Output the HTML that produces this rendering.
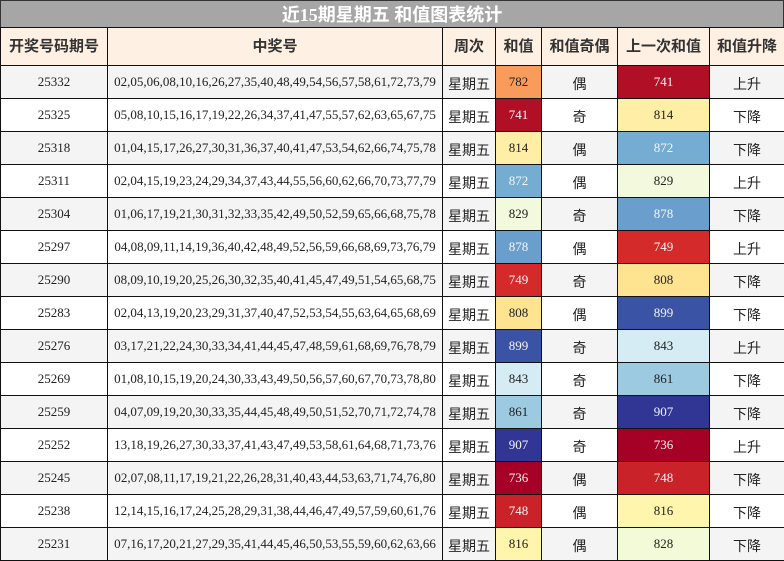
<!DOCTYPE html><html><head><meta charset="utf-8"><style>
body{margin:0;width:784px;height:561px;overflow:hidden;background:#fff;font-family:"Liberation Serif","Noto Sans CJK SC",serif}
.t{position:absolute;left:0;top:0;width:784px;height:28px;background:#a6a6a6;color:#fff;font:bold 18px/28px "Liberation Serif","Noto Sans CJK SC",sans-serif;text-align:center;box-sizing:border-box;border:1px solid #333;border-bottom:none}
table{position:absolute;left:0;top:27px;border-collapse:collapse;table-layout:fixed;width:784px}
tr{height:33px}
tr:first-child{height:38px}
td,th{border:1px solid #111;text-align:center;padding:0;overflow:hidden;white-space:nowrap;line-height:16px}
th{background:#fef0e2;color:#333;font:bold 15px/16px "Liberation Sans","Noto Sans CJK SC",sans-serif}
td{font-size:13px;color:#222}
tr:nth-child(even) td{background:#f4f4f4}
.c{font-family:"Liberation Sans","Noto Sans CJK SC",sans-serif;font-size:14px;line-height:16px;vertical-align:bottom;padding-bottom:6px}
.w{color:#f4f4f4}
</style></head><body>
<div class="t">近15期星期五 和值图表统计</div>
<table>
<colgroup><col style="width:107px"><col style="width:335px"><col style="width:53px"><col style="width:46px"><col style="width:76px"><col style="width:92px"><col style="width:75px"></colgroup>
<tr><th>开奖号码期号</th><th>中奖号</th><th>周次</th><th>和值</th><th>和值奇偶</th><th>上一次和值</th><th>和值升降</th></tr>
<tr><td>25332</td><td>02,05,06,08,10,16,26,27,35,40,48,49,54,56,57,58,61,72,73,79</td><td class="c">星期五</td><td style="background:#f99b5a!important">782</td><td class="c">偶</td><td class="w" style="background:#b10f26!important">741</td><td class="c">上升</td></tr>
<tr><td>25325</td><td>05,08,10,15,16,17,19,22,26,34,37,41,47,55,57,62,63,65,67,75</td><td class="c">星期五</td><td class="w" style="background:#b10f26!important">741</td><td class="c">奇</td><td style="background:#feeea6!important">814</td><td class="c">下降</td></tr>
<tr><td>25318</td><td>01,04,15,17,26,27,30,31,36,37,40,41,47,53,54,62,66,74,75,78</td><td class="c">星期五</td><td style="background:#feeea6!important">814</td><td class="c">偶</td><td class="w" style="background:#74add1!important">872</td><td class="c">下降</td></tr>
<tr><td>25311</td><td>02,04,15,19,23,24,29,34,37,43,44,55,56,60,62,66,70,73,77,79</td><td class="c">星期五</td><td class="w" style="background:#74add1!important">872</td><td class="c">偶</td><td style="background:#f2f9dc!important">829</td><td class="c">上升</td></tr>
<tr><td>25304</td><td>01,06,17,19,21,30,31,32,33,35,42,49,50,52,59,65,66,68,75,78</td><td class="c">星期五</td><td style="background:#f2f9dc!important">829</td><td class="c">奇</td><td class="w" style="background:#6a9fcd!important">878</td><td class="c">下降</td></tr>
<tr><td>25297</td><td>04,08,09,11,14,19,36,40,42,48,49,52,56,59,66,68,69,73,76,79</td><td class="c">星期五</td><td class="w" style="background:#6a9fcd!important">878</td><td class="c">偶</td><td class="w" style="background:#d42a2a!important">749</td><td class="c">上升</td></tr>
<tr><td>25290</td><td>08,09,10,19,20,25,26,30,32,35,40,41,45,47,49,51,54,65,68,75</td><td class="c">星期五</td><td class="w" style="background:#d42a2a!important">749</td><td class="c">奇</td><td style="background:#fee391!important">808</td><td class="c">下降</td></tr>
<tr><td>25283</td><td>02,04,13,19,20,23,29,31,37,40,47,52,53,54,55,63,64,65,68,69</td><td class="c">星期五</td><td style="background:#fee391!important">808</td><td class="c">偶</td><td class="w" style="background:#3a53a4!important">899</td><td class="c">下降</td></tr>
<tr><td>25276</td><td>03,17,21,22,24,30,33,34,41,44,45,47,48,59,61,68,69,76,78,79</td><td class="c">星期五</td><td class="w" style="background:#3a53a4!important">899</td><td class="c">奇</td><td style="background:#d6ecf4!important">843</td><td class="c">上升</td></tr>
<tr><td>25269</td><td>01,08,10,15,19,20,24,30,33,43,49,50,56,57,60,67,70,73,78,80</td><td class="c">星期五</td><td style="background:#d6ecf4!important">843</td><td class="c">奇</td><td style="background:#9ccae1!important">861</td><td class="c">下降</td></tr>
<tr><td>25259</td><td>04,07,09,19,20,30,33,35,44,45,48,49,50,51,52,70,71,72,74,78</td><td class="c">星期五</td><td style="background:#9ccae1!important">861</td><td class="c">奇</td><td class="w" style="background:#313695!important">907</td><td class="c">下降</td></tr>
<tr><td>25252</td><td>13,18,19,26,27,30,33,37,41,43,47,49,53,58,61,64,68,71,73,76</td><td class="c">星期五</td><td class="w" style="background:#313695!important">907</td><td class="c">奇</td><td class="w" style="background:#a50026!important">736</td><td class="c">上升</td></tr>
<tr><td>25245</td><td>02,07,08,11,17,19,21,22,26,28,31,40,43,44,53,63,71,74,76,80</td><td class="c">星期五</td><td class="w" style="background:#a50026!important">736</td><td class="c">偶</td><td class="w" style="background:#c92228!important">748</td><td class="c">下降</td></tr>
<tr><td>25238</td><td>12,14,15,16,17,24,25,28,29,31,38,44,46,47,49,57,59,60,61,76</td><td class="c">星期五</td><td class="w" style="background:#c92228!important">748</td><td class="c">偶</td><td style="background:#fff5ac!important">816</td><td class="c">下降</td></tr>
<tr><td>25231</td><td>07,16,17,20,21,27,29,35,41,44,45,46,50,53,55,59,60,62,63,66</td><td class="c">星期五</td><td style="background:#fff5ac!important">816</td><td class="c">偶</td><td style="background:#f3fad8!important">828</td><td class="c">下降</td></tr>
</table>
</body></html>
